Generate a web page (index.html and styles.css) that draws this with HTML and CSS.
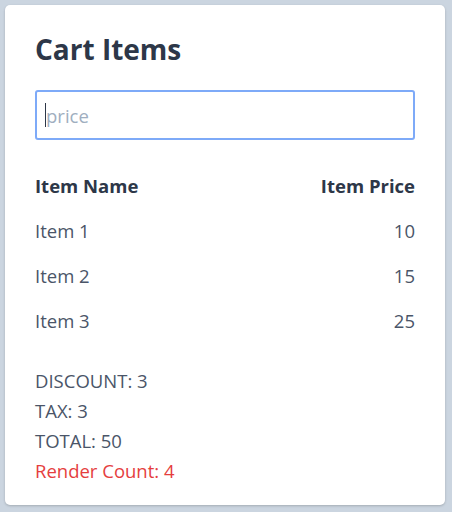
FILE: index.html
```html
<!DOCTYPE html>
<html lang="en">
<head>
<meta charset="utf-8">
<title>Cart Items</title>
<link rel="stylesheet" href="styles.css">
</head>
<body>
<div class="card">
  <h1 class="title">Cart Items</h1>
  <div class="field"><span class="caret"></span><span class="placeholder">price</span></div>
  <table class="items">
    <thead>
      <tr><th class="name">Item Name</th><th class="price">Item Price</th></tr>
    </thead>
    <tbody>
      <tr><td class="name">Item 1</td><td class="price">10</td></tr>
      <tr><td class="name">Item 2</td><td class="price">15</td></tr>
      <tr><td class="name">Item 3</td><td class="price">25</td></tr>
    </tbody>
  </table>
  <div class="summary">
    <div>DISCOUNT: 3</div>
    <div>TAX: 3</div>
    <div>TOTAL: 50</div>
    <div class="render">Render Count: 4</div>
  </div>
</div>
</body>
</html>
```
FILE: styles.css
```css
html, body {
  margin: 0;
  padding: 0;
}
body {
  background: #cbd5e0;
  padding: 5px;
  font-family: "Open Sans", "Noto Sans", sans-serif;
  color: #2d3748;
}
.card {
  box-sizing: border-box;
  width: 440px;
  height: 500px;
  background: #fff;
  border-radius: 5px;
  box-shadow: 0 1px 3px rgba(0,0,0,0.12), 0 1px 2px rgba(0,0,0,0.08);
  padding: 30px;
}
.title {
  margin: 0 0 27px;
  font-size: 28px;
  line-height: 28px;
  font-weight: 700;
  color: #2d3748;
}
.field {
  box-sizing: border-box;
  height: 50px;
  border: 2px solid #7eaaf8;
  border-radius: 3px;
  display: flex;
  align-items: center;
  padding-left: 8px;
}
.caret {
  width: 1px;
  height: 24px;
  background: #2d3748;
}
.placeholder {
  font-size: 18.5px;
  color: #a0aec0;
}
.items {
  width: 100%;
  border-collapse: collapse;
  margin-top: 23px;
  font-size: 18.5px;
}
.items th, .items td {
  padding: 0;
  height: 45px;
}
.items th {
  font-weight: 700;
  color: #2d3748;
}
.items td {
  color: #4a5568;
}
.items .name { text-align: left; }
.items .price { text-align: right; }
.summary {
  margin-top: 23px;
  font-size: 18.5px;
  line-height: 30px;
  color: #4a5568;
}
.summary .render {
  color: #e53e3e;
}
```
